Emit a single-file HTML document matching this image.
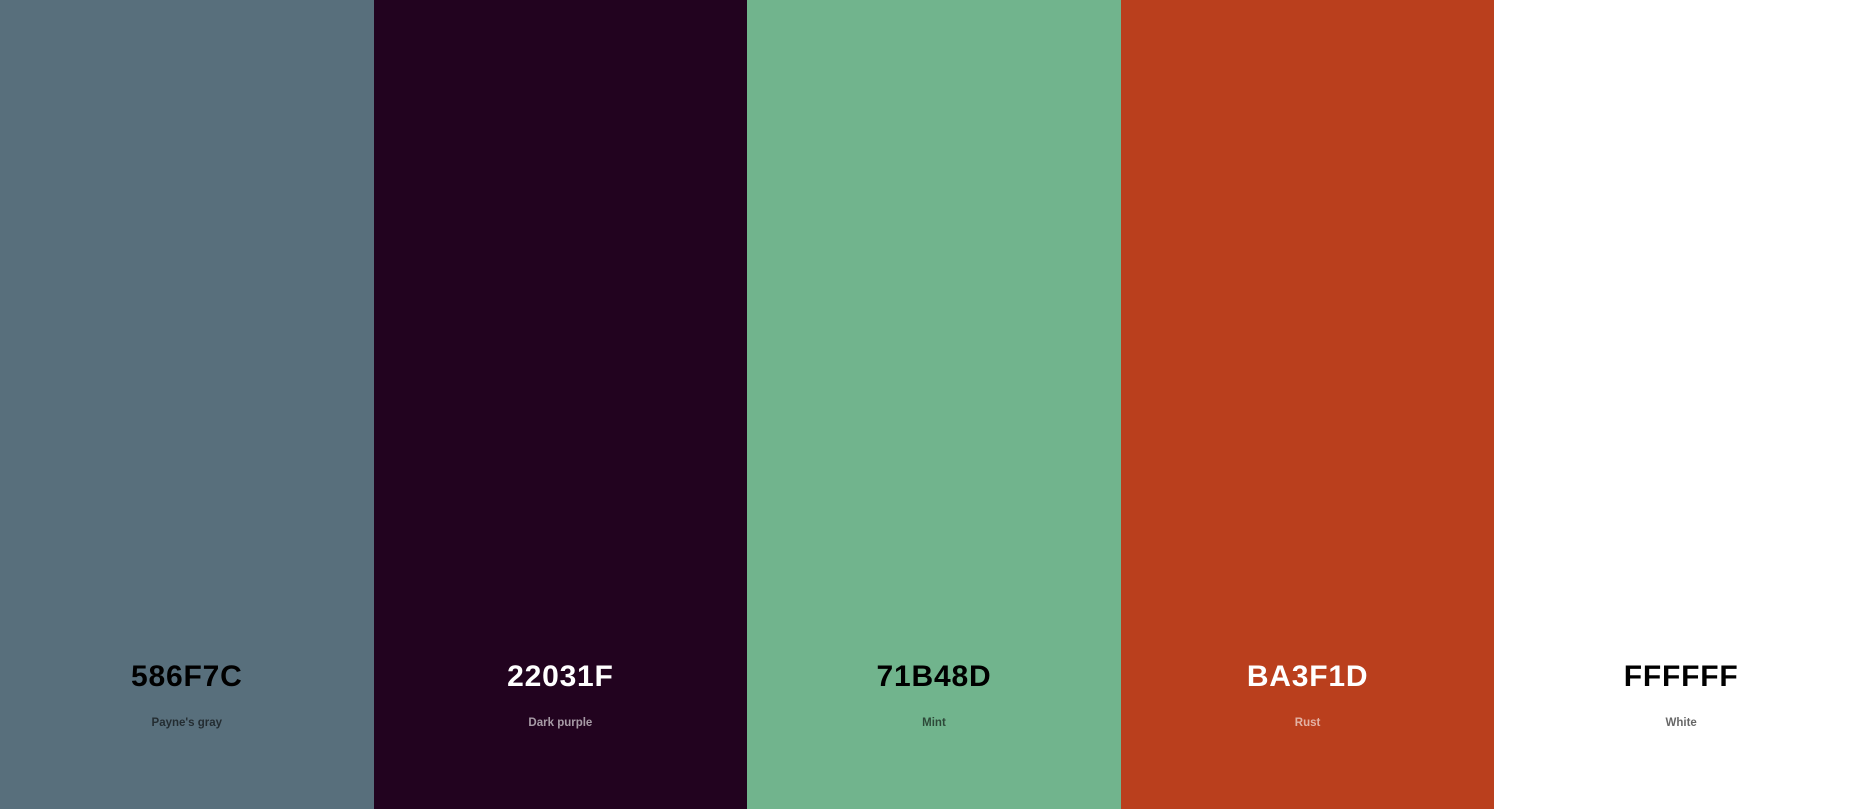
<!DOCTYPE html>
<html><head><style>
html,body{margin:0;padding:0;width:1868px;height:809px;overflow:hidden}
.w{display:flex;width:1868px;height:809px}
.c{flex:1;position:relative;font-family:"Liberation Sans",sans-serif}
.h{position:absolute;left:0;right:0;top:658px;text-align:center;font-size:30px;line-height:38px;font-weight:bold;letter-spacing:0.8px;-webkit-text-stroke:0px}
.l{position:absolute;left:0;right:0;top:715px;text-align:center;font-size:11.5px;line-height:16px;font-weight:bold}
</style></head><body><div class="w">
<div class="c" style="background:#586F7C"><div class="h" style="color:#000">586F7C</div><div class="l" style="color:rgba(0,0,0,.6)">Payne's gray</div></div>
<div class="c" style="background:#22031F"><div class="h" style="color:#fff">22031F</div><div class="l" style="color:rgba(255,255,255,.6)">Dark purple</div></div>
<div class="c" style="background:#71B48D"><div class="h" style="color:#000">71B48D</div><div class="l" style="color:rgba(0,0,0,.6)">Mint</div></div>
<div class="c" style="background:#BA3F1D"><div class="h" style="color:#fff">BA3F1D</div><div class="l" style="color:rgba(255,255,255,.6)">Rust</div></div>
<div class="c" style="background:#FFFFFF"><div class="h" style="color:#000">FFFFFF</div><div class="l" style="color:rgba(0,0,0,.6)">White</div></div>
</div></body></html>
